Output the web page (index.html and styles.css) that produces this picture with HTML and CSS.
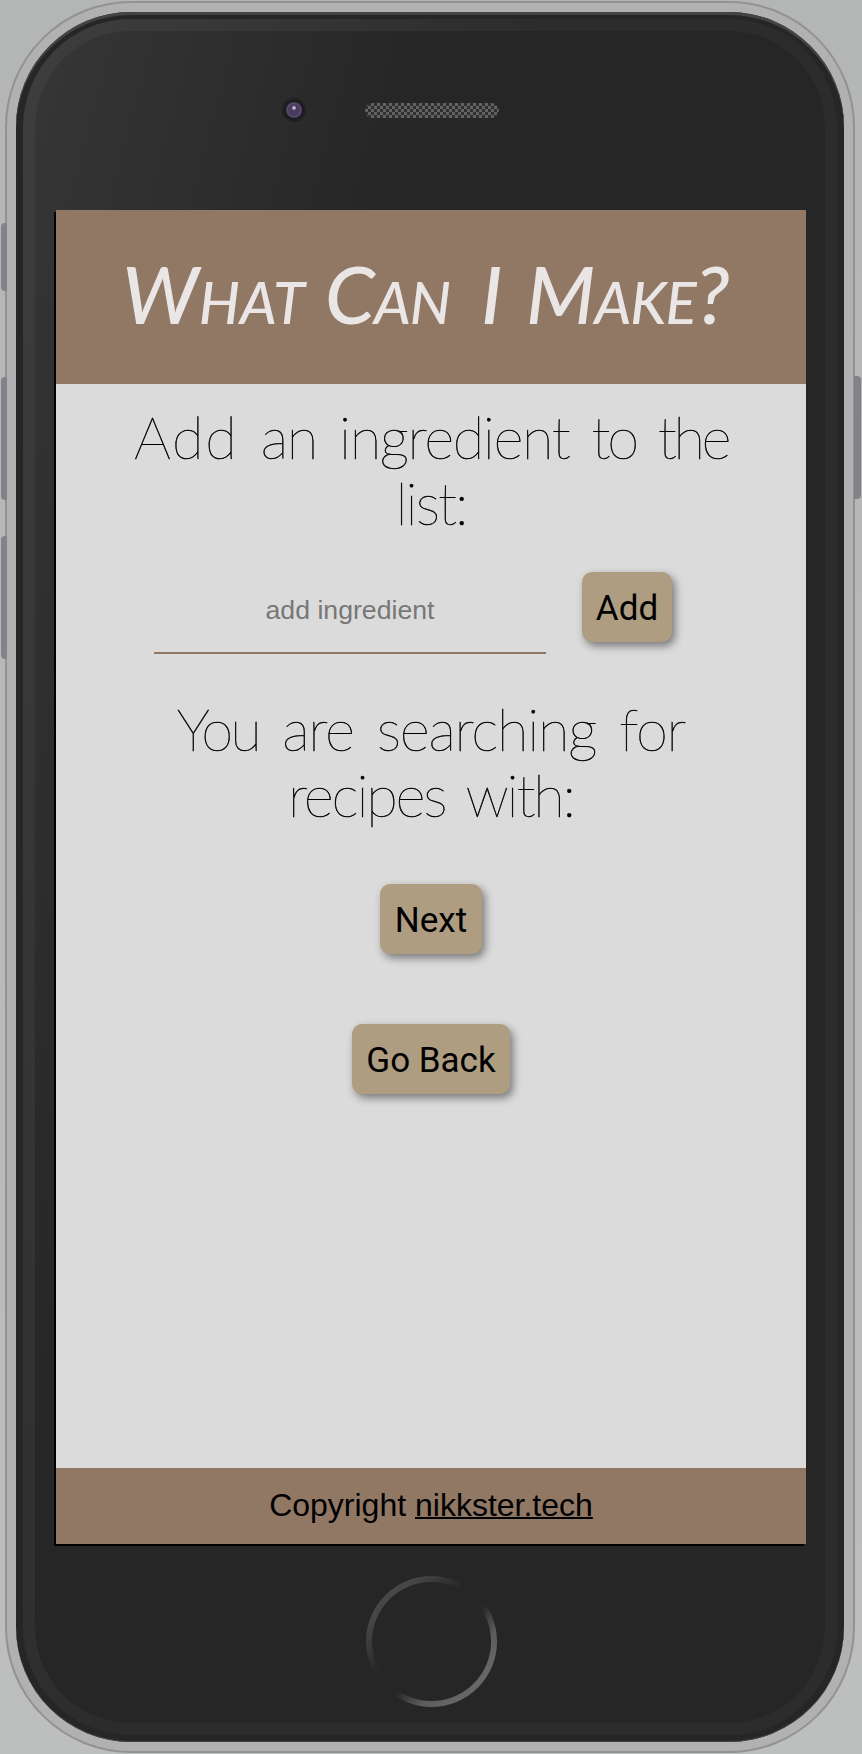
FILE: index.html
```html
<!DOCTYPE html>
<html lang="en">
<head>
<meta charset="utf-8">
<title>What Can I Make?</title>
<link rel="stylesheet" href="styles.css">
</head>
<body>
<div class="phone">
  <i class="key mute"></i><i class="key up"></i><i class="key down"></i><i class="key power"></i>
  <div class="bezel"><div class="rim"><div class="face">
    <div class="sensors"><span class="camera"></span>
      <svg class="speaker" width="134" height="16" viewBox="0 0 134 16"><defs><pattern id="mesh" width="6" height="6" patternUnits="userSpaceOnUse"><rect width="6" height="6" fill="#303030"/><path d="M0 0h3v3H0zM3 3h3v3H3z" fill="#626262"/></pattern></defs><rect width="134" height="15" rx="7.5" fill="url(#mesh)"/></svg>
    </div>
    <div class="screen">
      <header class="header"><h1 class="title"><span class="w-what">What</span> <span class="w-can">Can</span> <span class="w-i">I</span> <span class="w-make">Make<b class="mark">?</b></span></h1></header>
      <main class="main">
        <h2 class="heading"><span class="line l1"><span class="wide">Add</span> an ingredient <span class="tight">to the</span></span> <span class="line l2">list:</span></h2>
        <form class="form"><input class="field" type="text" placeholder="add ingredient"><button class="btn" type="button">Add</button></form>
        <h2 class="heading second"><span class="line l3"><span class="you">You</span> are searching for</span> <span class="line l4">recipes with:</span></h2>
        <button class="btn next" type="button">Next</button>
        <button class="btn back" type="button">Go Back</button>
      </main>
      <footer class="footer"><span>Copyright <a class="link" href="#">nikkster.tech</a></span></footer>
    </div>
    <div class="bottom"><div class="home"></div></div>
  </div></div></div>
</div>
</body>
</html>
```
FILE: styles.css
```css
* { box-sizing: border-box; }
body { margin: 0; height: 1754px; padding: 1px 7px 1px 5px; overflow: hidden; background: linear-gradient(#b3b6b5, #bcbfbe); font-family: "Liberation Sans", Arial, sans-serif; }
.phone { position: relative; width: 850px; height: 1752px; padding: 9px; border: 2px solid #929292; border-radius: 126px; background: #b1b1b1; }
.key { position: absolute; left: -6px; width: 6px; background: #828288; border-radius: 4px 0 0 4px; }
.mute { top: 220px; height: 68px; }
.up { top: 374px; height: 123px; }
.down { top: 533px; height: 123px; }
.power { left: auto; right: -8px; top: 373px; width: 7px; height: 123px; border-radius: 0 4px 4px 0; }
.bezel { width: 828px; height: 1730px; padding: 7px; border-radius: 115px; background: #262626; box-shadow: inset 0 3px 0 #444, inset 0 -1px 0 #444; }
.rim { height: 1716px; padding: 12px; border-radius: 108px; background: linear-gradient(105deg, #3e3e3e 0, #2c2c2c 42%, #2c2c2c); }
.face { height: 1692px; padding: 0 19px 0 21px; border-radius: 96px; background: linear-gradient(105deg, #363636 0, #262626 32%, #262626); }
.sensors { display: flex; align-items: center; height: 179px; padding: 0 0 21px 223px; gap: 56px; }
.camera { width: 30px; height: 30px; border-radius: 50%; background: radial-gradient(circle at 50% 43%, #c6bfd2 0 1px, transparent 2.5px), radial-gradient(circle, #473a5c 0 5px, #5a4e70 7px, #1c1a22 8.5px, #202020 11px, #2d2f2e 14px, #292929 15px); }
.speaker { margin-top: 1px; }
.screen { display: flex; flex-direction: column; height: 1334px; background: #dbdbdb; box-shadow: -2px 2px 0 #000; }
.header { height: 174px; padding-left: 66px; background: #917865; }
.title { display: flex; margin: 0; padding-top: 43px; font: italic 500 58px/80px Lato, sans-serif; text-transform: uppercase; color: #ebe6e6; white-space: nowrap; }
.title span::first-letter { font-size: 80px; }
.w-what { width: 203px; letter-spacing: 0; }
.w-can { width: 156px; letter-spacing: -1px; }
.w-i { width: 45px; }
.w-make { letter-spacing: -1px; }
.mark { font-weight: 500; font-size: 80px; line-height: 60px; }
.main { display: flex; flex-direction: column; align-items: center; flex: 1; padding-top: 20px; }
.heading { margin: 0; font: 100 58px/66px Lato, sans-serif; color: #000; -webkit-text-stroke: .5px #000; text-align: center; white-space: nowrap; }
.line { display: block; }
.l1 { letter-spacing: -1.4px; word-spacing: 7px; }
.wide { letter-spacing: 1.8px; }
.tight { letter-spacing: -3.4px; word-spacing: 9px; }
.l2 { letter-spacing: -2px; }
.l3 { letter-spacing: -1.3px; word-spacing: 8px; }
.you { letter-spacing: -2.8px; }
.l4 { letter-spacing: -2.2px; word-spacing: 7px; }
.form { display: flex; gap: 36px; align-items: flex-start; margin: 36px 0 0 -36px; }
.field { width: 392px; height: 82px; padding: 0 0 4px; border: 0; border-bottom: 2px solid #917865; background: none; font: 26.67px "Liberation Sans", Arial, sans-serif; text-align: center; }
.field::placeholder { color: #777; }
.btn { height: 70px; padding: 3px 0 0; border: 0; border-radius: 10px; background: #af9d82; box-shadow: 3px 4px 9px rgba(0,0,0,.45); font: 35px/67px Roboto, sans-serif; color: #000; white-space: nowrap; }
.form .btn { width: 90px; }
.second { margin-top: 42px; }
.next { width: 102px; margin-top: 56px; }
.back { width: 158px; margin-top: 70px; }
.footer { display: flex; align-items: center; justify-content: center; height: 76px; padding-bottom: 2px; background: #917865; font-size: 32px; color: #000; }
.link { color: #000; text-decoration-thickness: 2px; }
.bottom { display: flex; justify-content: center; padding-top: 32px; }
.home { width: 131px; height: 131px; border-radius: 50%; background: radial-gradient(circle, #262626 0 59px, transparent 60px), linear-gradient(135deg, #4d4d4d 0, #464646 20%, #262626 41%, #262626 56%, #5c5c5c 70%, #747474); }
```
